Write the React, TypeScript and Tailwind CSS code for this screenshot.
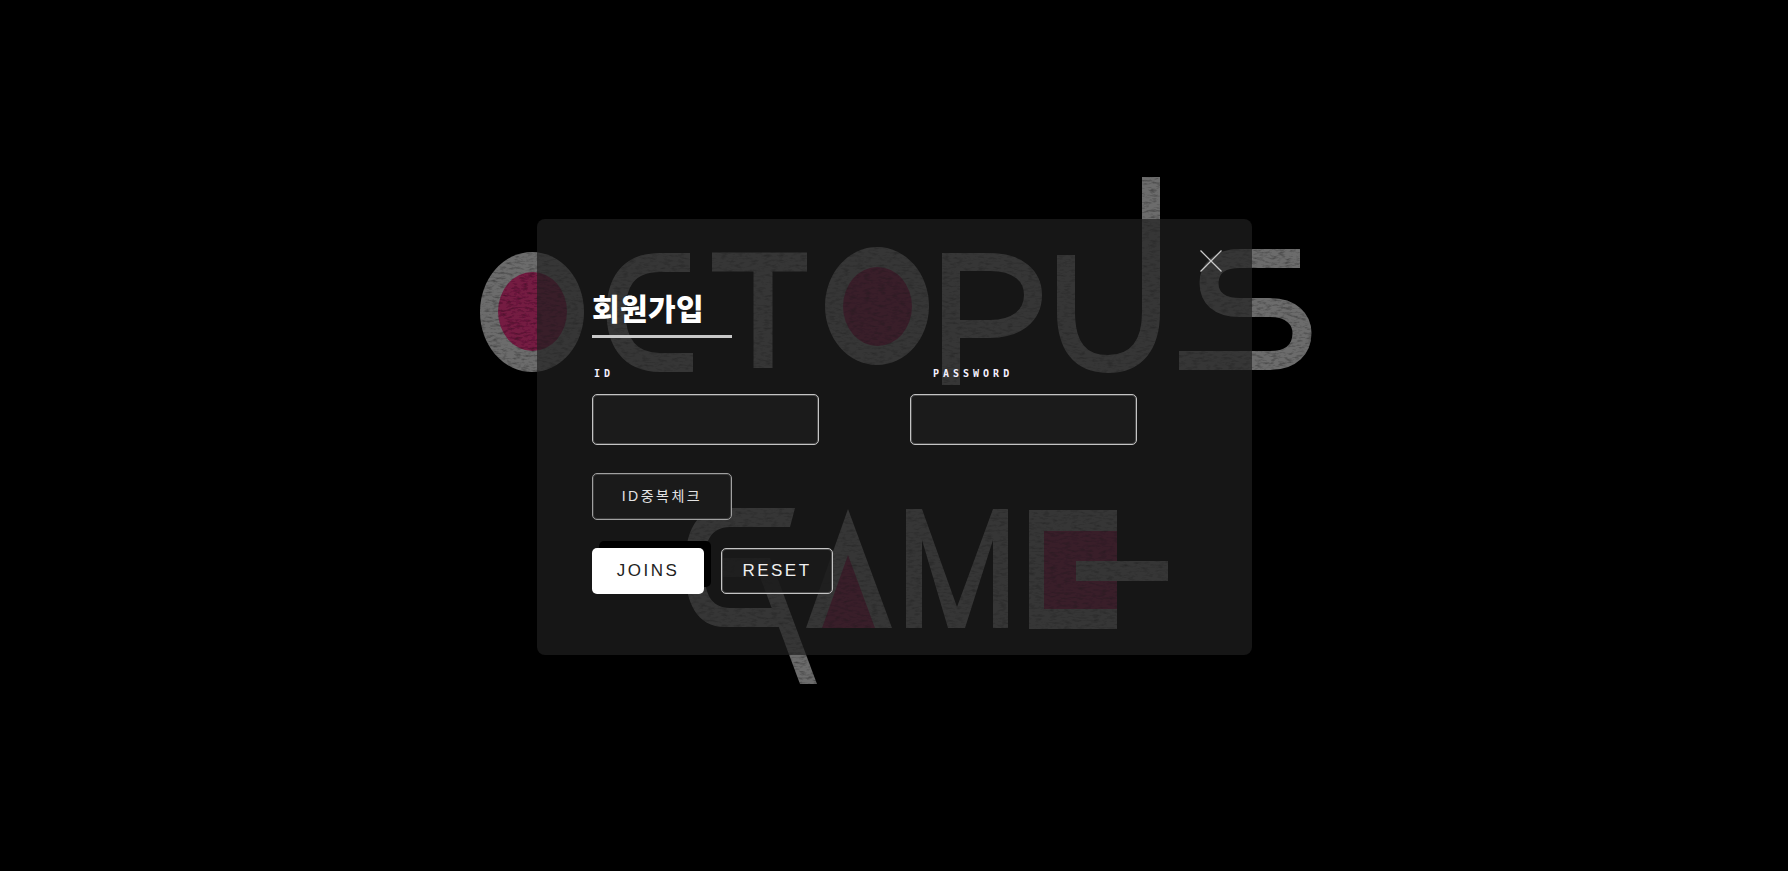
const gray = "#6c6c6c";
const red = "#741a42";

function Logo() {
    return (
        <svg
            className="absolute inset-0"
            width="1788"
            height="871"
            viewBox="0 0 1788 871"
            fill="none"
        >
            <defs>
                <filter id="worn" filterUnits="userSpaceOnUse" x="0" y="0" width="1788" height="871">
                    <feTurbulence type="fractalNoise" baseFrequency="0.14 0.4" numOctaves="3" seed="4" />
                    <feColorMatrix values="0 0 0 0 0  0 0 0 0 0  0 0 0 0 0  0 0 0 -0.8 1.36" />
                    <feComposite in="SourceGraphic" operator="in" />
                    <feGaussianBlur stdDeviation="0.7" />
                </filter>
            </defs>
            <g filter="url(#worn)">
                {/* O */}
                <ellipse cx="532" cy="312" rx="52" ry="60" fill={gray} />
                <ellipse cx="532.5" cy="311.5" rx="34.5" ry="39.5" fill={red} />
                {/* second O */}
                <ellipse cx="877" cy="306" rx="52" ry="59" fill={gray} />
                <ellipse cx="877.5" cy="306.5" rx="34.5" ry="39.5" fill={red} />
                <g stroke={gray} strokeWidth="18">
                    {/* C */}
                    <path d="M690 262.5H660C626 262.5 616 285 616 312C616 340 628 362.5 660 362.5H693" strokeWidth="19" />
                    {/* T */}
                    <path d="M712 262H807M763 262V368" strokeWidth="19" />
                    {/* P */}
                    <path d="M951 385V262H990C1018 262 1033 276 1033 295C1033 316 1016 329 990 329H951" />
                    {/* U with the long right stem */}
                    <path d="M1066 255V312C1066 346 1080 364 1108 364C1136 364 1151 346 1151 312V177" />
                    {/* S */}
                    <path
                        d="M1300 258.5H1240C1218 258.5 1209 270 1209 283C1209 297 1218 307.5 1240 307.5H1270C1292 307.5 1302 320 1302 333C1302 348 1292 360.5 1270 360.5H1179"
                        strokeWidth="19"
                    />
                </g>
                {/* G */}
                <path
                    d="M795 508L790 527H730C710 527 704 543 704 567C704 592 710 608 730 608H780V627H725C697 627 685 603 685 567C685 530 697 508 725 508Z"
                    fill={gray}
                />
                <path d="M723 558H770V577H723Z" fill={gray} />
                <path d="M753 558H770L817 684H800Z" fill={gray} />
                {/* A */}
                <path d="M848 509L892 628H806Z" fill={gray} />
                <path d="M848 555L875 628H822Z" fill={red} />
                {/* M */}
                <path
                    d="M906 509H922L957 607L993 509H1008V628H993V540L965 628H948L922 540V628H906Z"
                    fill={gray}
                />
                {/* E */}
                <path d="M1029 510H1117V629H1029Z" fill={gray} />
                <path d="M1044 531H1117V609H1044Z" fill={red} />
                <path d="M1076 561H1168V581H1076Z" fill={gray} />
            </g>
        </svg>
    );
}

function CloseIcon() {
    return (
        <svg width="22" height="22" viewBox="0 0 22 22" fill="none" stroke="#c8c8c8" strokeWidth="1.3">
            <path d="M0.5 0.5L21.5 21.5M21.5 0.5L0.5 21.5" />
        </svg>
    );
}

export default function App() {
    return (
        <div className="relative h-[871px] overflow-hidden bg-black font-['Liberation_Sans','Noto_Sans_CJK_KR',sans-serif]">
            <Logo />

            <div className="relative flex justify-center pt-[219px]">
                <form className="relative ml-[1px] h-[436px] w-[715px] rounded-lg bg-[rgba(31,31,31,0.7)] pl-[55px] pt-[71px]">
                    <button type="button" className="absolute left-[663px] top-[31px] block">
                        <CloseIcon />
                    </button>

                    <h2 className="w-[140px] whitespace-nowrap border-b-[3px] border-[#c8c8c8] pb-[11px] font-['Noto_Sans_CJK_KR',sans-serif] text-[30px] font-black leading-[34px] tracking-[0.4px] text-white">
                        회원가입
                    </h2>

                    <div className="mt-[30px] grid w-[545px] grid-cols-[227px_227px] gap-x-[91px]">
                        <div>
                            <label
                                htmlFor="id"
                                className="block h-[12px] pl-[2px] font-['DejaVu_Sans_Mono',monospace] text-[10px] font-bold leading-[12px] tracking-[4px] text-[#f4f0ff]"
                            >
                                ID
                            </label>
                            <input
                                id="id"
                                type="text"
                                className="mt-[14px] block h-[51px] w-[227px] rounded-[5px] border border-[#c4c4c4] bg-[#1b1b1b] shadow-[inset_0_0_0_1px_#4a4a4a] outline-none"
                            />
                        </div>
                        <div>
                            <label
                                htmlFor="password"
                                className="block h-[12px] pl-[23px] font-['DejaVu_Sans_Mono',monospace] text-[10px] font-bold leading-[12px] tracking-[4px] text-[#f4f0ff]"
                            >
                                PASSWORD
                            </label>
                            <input
                                id="password"
                                type="password"
                                className="mt-[14px] block h-[51px] w-[227px] rounded-[5px] border border-[#c4c4c4] bg-[#1b1b1b] shadow-[inset_0_0_0_1px_#4a4a4a] outline-none"
                            />
                        </div>
                    </div>

                    <button
                        type="button"
                        className="mt-[28px] block h-[47px] w-[140px] rounded-[5px] border border-[#a0a0a0] bg-[#1a1a1a] text-[14px] tracking-[2.5px] text-[#e4e4e4] shadow-[inset_0_0_0_1px_#3a3a3a]"
                    >
                        ID중복체크
                    </button>

                    <div className="mt-[28px] flex gap-[17px]">
                        <button
                            type="submit"
                            className="h-[46px] w-[112px] rounded-[5px] bg-white text-[17px] tracking-[2.5px] text-[#222] shadow-[7px_-7px_0_#000]"
                        >
                            JOINS
                        </button>
                        <button
                            type="reset"
                            className="h-[46px] w-[112px] rounded-[5px] border border-[#c4c4c4] bg-[#1a1a1a]/80 text-[17px] tracking-[2.5px] text-[#f0f0f0] shadow-[inset_0_0_0_1px_#4a4a4a]"
                        >
                            RESET
                        </button>
                    </div>
                </form>
            </div>
        </div>
    );
}
